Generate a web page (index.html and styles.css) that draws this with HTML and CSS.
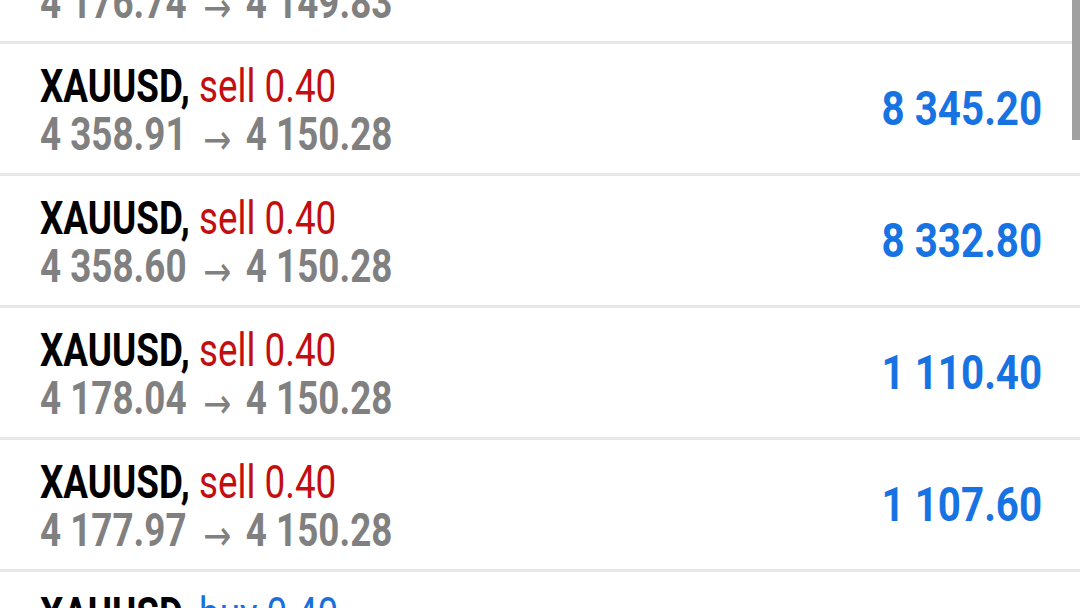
FILE: index.html
```html
<!DOCTYPE html>
<html>
<head>
<meta charset="utf-8">
<link rel="stylesheet" href="styles.css">
</head>
<body>
<div class="list">
  <div class="row">
    <div class="info">
      <div class="line1"><span class="cond"><span class="sym">XAUUSD,</span> <span class="sell">sell 0.40</span></span></div>
      <div class="line2"><span class="cond">4 176.74<span class="arrow">→</span>4 149.83</span></div>
    </div>
    <div class="profit"><span class="cond cond-r">5 297.60</span></div>
  </div>
  <div class="row">
    <div class="info">
      <div class="line1"><span class="cond"><span class="sym">XAUUSD,</span> <span class="sell">sell 0.40</span></span></div>
      <div class="line2"><span class="cond">4 358.91<span class="arrow">→</span>4 150.28</span></div>
    </div>
    <div class="profit"><span class="cond cond-r">8 345.20</span></div>
  </div>
  <div class="row">
    <div class="info">
      <div class="line1"><span class="cond"><span class="sym">XAUUSD,</span> <span class="sell">sell 0.40</span></span></div>
      <div class="line2"><span class="cond">4 358.60<span class="arrow">→</span>4 150.28</span></div>
    </div>
    <div class="profit"><span class="cond cond-r">8 332.80</span></div>
  </div>
  <div class="row">
    <div class="info">
      <div class="line1"><span class="cond"><span class="sym">XAUUSD,</span> <span class="sell">sell 0.40</span></span></div>
      <div class="line2"><span class="cond">4 178.04<span class="arrow">→</span>4 150.28</span></div>
    </div>
    <div class="profit"><span class="cond cond-r">1 110.40</span></div>
  </div>
  <div class="row">
    <div class="info">
      <div class="line1"><span class="cond"><span class="sym">XAUUSD,</span> <span class="sell">sell 0.40</span></span></div>
      <div class="line2"><span class="cond">4 177.97<span class="arrow">→</span>4 150.28</span></div>
    </div>
    <div class="profit"><span class="cond cond-r">1 107.60</span></div>
  </div>
  <div class="row">
    <div class="info">
      <div class="line1"><span class="cond"><span class="sym">XAUUSD,</span> <span class="buy">buy 0.40</span></span></div>
      <div class="line2"><span class="cond">4 150.10<span class="arrow">→</span>4 150.28</span></div>
    </div>
    <div class="profit"><span class="cond cond-r">7.20</span></div>
  </div>
</div>
<div class="scrollbar"></div>
</body>
</html>
```

FILE: styles.css
```css
html, body {
  margin: 0;
  padding: 0;
  background: #ffffff;
  width: 1080px;
  height: 608px;
  overflow: hidden;
}

body {
  position: relative;
  font-family: "Roboto", "Liberation Sans", sans-serif;
}

.list {
  margin-top: -88px;
}

.row {
  display: flex;
  align-items: center;
  justify-content: space-between;
  height: 129px;
  box-sizing: content-box;
  padding: 0 38px 0 40px;
  border-bottom: 3px solid #e8e8e8;
}

.info {
  display: flex;
  flex-direction: column;
  padding-top: 2px;
}

.line1, .line2 {
  font-size: 46px;
  line-height: 48px;
  white-space: nowrap;
}

.cond {
  display: inline-block;
  transform: scaleX(0.8);
  transform-origin: left center;
}

.cond-r {
  transform-origin: right center;
}

.sym {
  font-weight: 700;
  color: #000000;
}

.sell {
  font-weight: 400;
  color: #c20e0e;
}

.buy {
  font-weight: 400;
  color: #1a6fdc;
}

.line2 {
  font-weight: 700;
  color: #808080;
}

.arrow {
  display: inline-block;
  font-family: "DejaVu Sans", sans-serif;
  font-weight: 400;
  font-size: 42px;
  line-height: 0;
  vertical-align: -4px;
  margin: 0 18px 0 21px;
}

.profit {
  font-size: 48px;
  line-height: 52px;
  font-weight: 700;
  color: #1873e2;
  white-space: nowrap;
}

.profit .cond {
  transform: scaleX(0.84);
}

.scrollbar {
  position: absolute;
  top: 0;
  right: 0;
  width: 8px;
  height: 140px;
  background: #a0a0a0;
}
```
